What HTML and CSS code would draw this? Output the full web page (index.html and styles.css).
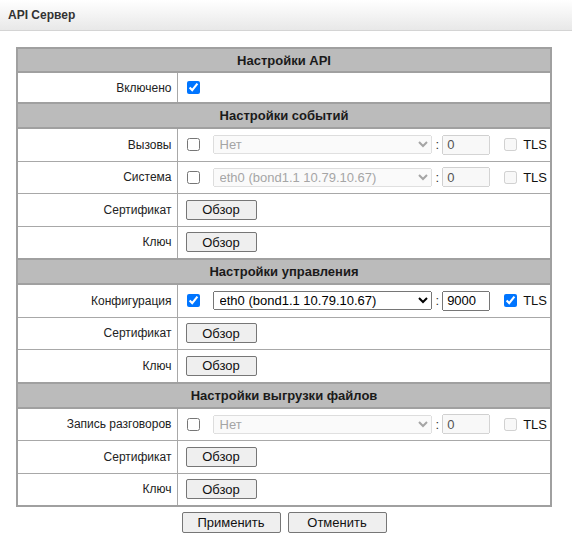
FILE: index.html
```html
<!DOCTYPE html>
<html lang="ru">
<head>
<meta charset="utf-8">
<title>API Сервер</title>
<link rel="stylesheet" href="styles.css">
</head>
<body>
<div class="topbar"><span class="title">API Сервер</span></div>
<div class="content">
<table class="settings">
  <colgroup><col class="c-label"><col class="c-value"></colgroup>
  <tr class="head"><th colspan="2">Настройки API</th></tr>
  <tr class="row-short"><td class="label">Включено</td><td><div class="ctl"><input type="checkbox" class="cb" checked></div></td></tr>

  <tr class="head"><th colspan="2">Настройки событий</th></tr>
  <tr class="row"><td class="label">Вызовы</td><td><div class="ctl"><input type="checkbox" class="cb"><select class="sel" disabled><option>Нет</option></select><span class="colon">:</span><input type="text" class="port" value="0" disabled><label class="tls"><input type="checkbox" class="cb" disabled>TLS</label></div></td></tr>
  <tr class="row"><td class="label">Система</td><td><div class="ctl"><input type="checkbox" class="cb"><select class="sel" disabled><option>eth0 (bond1.1 10.79.10.67)</option></select><span class="colon">:</span><input type="text" class="port" value="0" disabled><label class="tls"><input type="checkbox" class="cb" disabled>TLS</label></div></td></tr>
  <tr class="row"><td class="label">Сертификат</td><td><div class="ctl"><button class="btn browse">Обзор</button></div></td></tr>
  <tr class="row"><td class="label">Ключ</td><td><div class="ctl"><button class="btn browse">Обзор</button></div></td></tr>

  <tr class="head"><th colspan="2">Настройки управления</th></tr>
  <tr class="row"><td class="label">Конфигурация</td><td><div class="ctl"><input type="checkbox" class="cb" checked><select class="sel"><option>eth0 (bond1.1 10.79.10.67)</option></select><span class="colon">:</span><input type="text" class="port" value="9000"><label class="tls"><input type="checkbox" class="cb" checked>TLS</label></div></td></tr>
  <tr class="row"><td class="label">Сертификат</td><td><div class="ctl"><button class="btn browse">Обзор</button></div></td></tr>
  <tr class="row"><td class="label">Ключ</td><td><div class="ctl"><button class="btn browse">Обзор</button></div></td></tr>

  <tr class="head"><th colspan="2">Настройки выгрузки файлов</th></tr>
  <tr class="row"><td class="label">Запись разговоров</td><td><div class="ctl"><input type="checkbox" class="cb"><select class="sel" disabled><option>Нет</option></select><span class="colon">:</span><input type="text" class="port" value="0" disabled><label class="tls"><input type="checkbox" class="cb" disabled>TLS</label></div></td></tr>
  <tr class="row"><td class="label">Сертификат</td><td><div class="ctl"><button class="btn browse">Обзор</button></div></td></tr>
  <tr class="row"><td class="label">Ключ</td><td><div class="ctl"><button class="btn browse">Обзор</button></div></td></tr>
</table>
<div class="actions">
  <button class="btn action">Применить</button>
  <button class="btn action">Отменить</button>
</div>
</div>
</body>
</html>
```
FILE: styles.css
```css
html, body {
  margin: 0;
  padding: 0;
  background: #fff;
  font-family: "Liberation Sans", Arial, sans-serif;
  font-size: 13px;
  color: #222;
}
.topbar {
  height: 30px;
  background: linear-gradient(#ffffff, #e8e8e8);
  border-bottom: 1px solid #d4d4d4;
  display: flex;
  align-items: center;
  padding-left: 8px;
}
.title {
  font-weight: bold;
  font-size: 12px;
  color: #333;
}
.content {
  padding: 16px 20px 0 16px;
}
.settings {
  width: 536px;
  table-layout: fixed;
  border-collapse: collapse;
  border: 2px solid #a0a0a0;
}
.c-label { width: 160px; }
.settings th, .settings td {
  border: 1px solid #a8a8a8;
  padding: 0 5px;
  vertical-align: middle;
}
.settings tr.head th {
  background: #bbbbbb;
  font-weight: bold;
  font-size: 13px;
  color: #1a1a1a;
  text-align: center;
  height: 23px;
  padding: 0;
  border-top: 2px solid #a0a0a0;
  border-bottom: 2px solid #a0a0a0;
}
.settings tr.head:first-child th { height: 22px; }
.settings tr.row td { height: 31.5px; }
.settings tr.row-short td { height: 29px; }
.settings td.label {
  text-align: right;
  font-size: 12px;
  color: #222;
}
.ctl {
  display: flex;
  align-items: center;
}
.ctl > * { flex-shrink: 0; }
.cb {
  width: 13px;
  height: 13px;
  margin: 0 0 0 4px;
}
.sel {
  margin-left: 13px;
  width: 219px;
  height: 19px;
  font-family: "Liberation Sans", Arial, sans-serif;
  font-size: 13px;
  padding: 0 0 0 2px;
}
.colon {
  margin: 0 3px 0 4px;
  color: #333;
}
.port {
  width: 48px;
  height: 20px;
  box-sizing: border-box;
  font-family: "Liberation Sans", Arial, sans-serif;
  font-size: 13px;
  padding: 0 3px;
}
.tls {
  display: flex;
  align-items: center;
  margin-left: 10px;
  color: #111;
}
.tls .cb { margin: 0 6px 0 4px; }
.btn {
  font-family: "Liberation Sans", Arial, sans-serif;
  font-size: 13px;
  height: 20px;
  padding: 0;
  border: 1px solid #767676;
  border-radius: 2px;
  background: #efefef;
  color: #111;
}
.browse {
  width: 71px;
  margin-left: 3px;
}
.actions {
  display: flex;
  justify-content: center;
  gap: 7px;
  width: 536px;
  margin-top: 5px;
}
.action {
  width: 99px;
  height: 21px;
}
```
